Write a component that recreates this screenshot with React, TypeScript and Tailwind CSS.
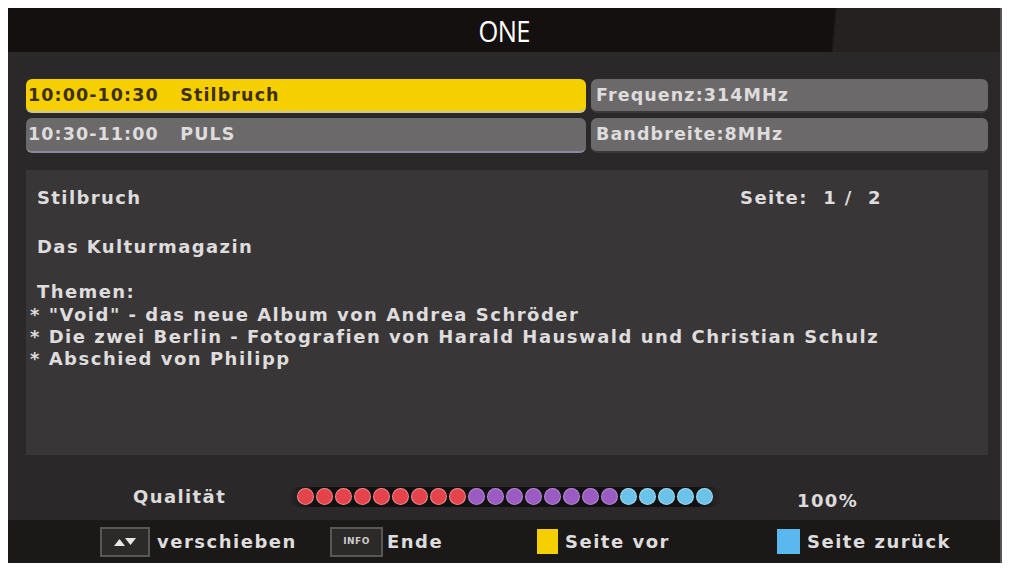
import React from "react";

const font = { fontFamily: '"DejaVu Sans", "Noto Sans", sans-serif' };

const dots = [
  ...Array(9).fill("red"),
  ...Array(8).fill("purple"),
  ...Array(5).fill("cyan"),
];

function Dot({ kind }: { kind: string }) {
  const cls =
    kind === "red"
      ? "bg-[#e5434b] ring-[#f08a8e]"
      : kind === "purple"
      ? "bg-[#9a5cc2] ring-[#b88ad6]"
      : "bg-[#6cc3ea] ring-[#a6dcf2]";
  return <div className={`w-[15px] h-[15px] rounded-full ring-1 ${cls}`} />;
}

export default function App() {
  return (
    <div className="w-[1010px] h-[568px] bg-white pt-2 pl-2" style={font}>
      <div className="w-[994px] h-[555px] bg-[#2a2828] flex flex-col border-r-2 border-[#555]">
        {/* title bar */}
        <div className="h-[44px] flex items-center justify-center bg-[linear-gradient(95deg,#141010_83%,#262121_83.3%)]">
          <span
            className="inline-block text-white text-[30px] scale-x-[0.85] tracking-tight"
            style={{ fontFamily: '"Open Sans", sans-serif' }}
          >
            ONE
          </span>
        </div>

        {/* event rows */}
        <div className="pl-[18px] pr-[12px] pt-[27px]">
          <div className="grid grid-cols-[560px_397px] gap-x-[5px] gap-y-[5px] text-[17.5px] font-bold tracking-[1.1px] whitespace-nowrap">
            <div className="h-[34px] rounded-md bg-[#f6cf00] text-[#3d3000] flex items-center pl-[2px] border-b-2 border-[#c9c3a8]">
              10:00-10:30&nbsp;&nbsp;&nbsp;Stilbruch
            </div>
            <div className="h-[34px] rounded-md bg-[#6c696a] text-[#dedcdc] flex items-center pl-[5px] border-b-2 border-[#3b393a]">
              Frequenz:314MHz
            </div>
            <div className="h-[35px] rounded-md bg-[#6c696a] text-[#dedcdc] flex items-center pl-[2px] border-b-2 border-[#8b87a0]">
              10:30-11:00&nbsp;&nbsp;&nbsp;PULS
            </div>
            <div className="h-[35px] rounded-md bg-[#6c696a] text-[#dedcdc] flex items-center pl-[5px] border-b-2 border-[#3b393a]">
              Bandbreite:8MHz
            </div>
          </div>

          {/* description */}
          <div className="mt-[17px] h-[285px] w-[962px] bg-[#383637] text-[#dedcdc] font-bold text-[18px] tracking-[1.4px] pt-[16px] pl-[11px] pr-[106px]">
            <div className="flex justify-between h-[22px] items-center">
              <span>Stilbruch</span>
              <span>Seite:&nbsp; 1 /&nbsp; 2</span>
            </div>
            <div className="mt-[27px] h-[22px] flex items-center">Das Kulturmagazin</div>
            <div className="mt-[24px] leading-[22px]">Themen:</div>
            <div className="-ml-[7px] mt-[1px] leading-[22px] tracking-[1.5px] whitespace-nowrap">
              <div>* "Void" - das neue Album von Andrea Schröder</div>
              <div>* Die zwei Berlin - Fotografien von Harald Hauswald und Christian Schulz</div>
              <div>* Abschied von Philipp</div>
            </div>
          </div>
        </div>

        {/* quality */}
        <div className="h-[65px] flex items-center pt-[18px] text-[#dcdada] font-bold tracking-[1.4px] text-[18px]">
          <span className="ml-[125px] w-[155px]">Qualität</span>
          <div className="h-[20px] flex items-center gap-[4px] px-[10px] rounded-full bg-[linear-gradient(90deg,transparent,#111_6%,#111_94%,transparent)]">
            {dots.map((d, i) => (
              <Dot key={i} kind={d} />
            ))}
          </div>
          <span className="ml-[75px] pt-[8px]">100%</span>
        </div>

        {/* footer */}
        <div className="h-[43px] bg-[#1b1818] flex items-center text-[#dedcdc] text-[18px] font-bold tracking-[1.5px]">
          <div className="ml-[92px] w-[230px] flex items-center">
            <div className="w-[50px] h-[30px] border-2 border-[#5a5656] bg-[#2c2929] flex items-center justify-center">
              <svg width="22" height="8" viewBox="0 0 22 8">
                <polygon points="0,8 5.5,1 11,8" fill="#e8e6e6" />
                <polygon points="11,0 22,0 16.5,7" fill="#e8e6e6" />
              </svg>
            </div>
            <span className="ml-[7px]">verschieben</span>
          </div>
          <div className="w-[207px] flex items-center">
            <div className="w-[53px] h-[30px] border-2 border-[#5a5656] bg-[#2c2929] flex items-center justify-center">
              <span className="text-[9px] font-bold tracking-[0.5px] text-[#cfcccc]">INFO</span>
            </div>
            <span className="ml-[4px]">Ende</span>
          </div>
          <div className="w-[240px] flex items-center">
            <div className="w-[21px] h-[25px] bg-[#f6cf00]" />
            <span className="ml-[7px]">Seite vor</span>
          </div>
          <div className="flex items-center">
            <div className="w-[23px] h-[25px] bg-[#5ab8ee]" />
            <span className="ml-[7px]">Seite zurück</span>
          </div>
        </div>
      </div>
    </div>
  );
}
